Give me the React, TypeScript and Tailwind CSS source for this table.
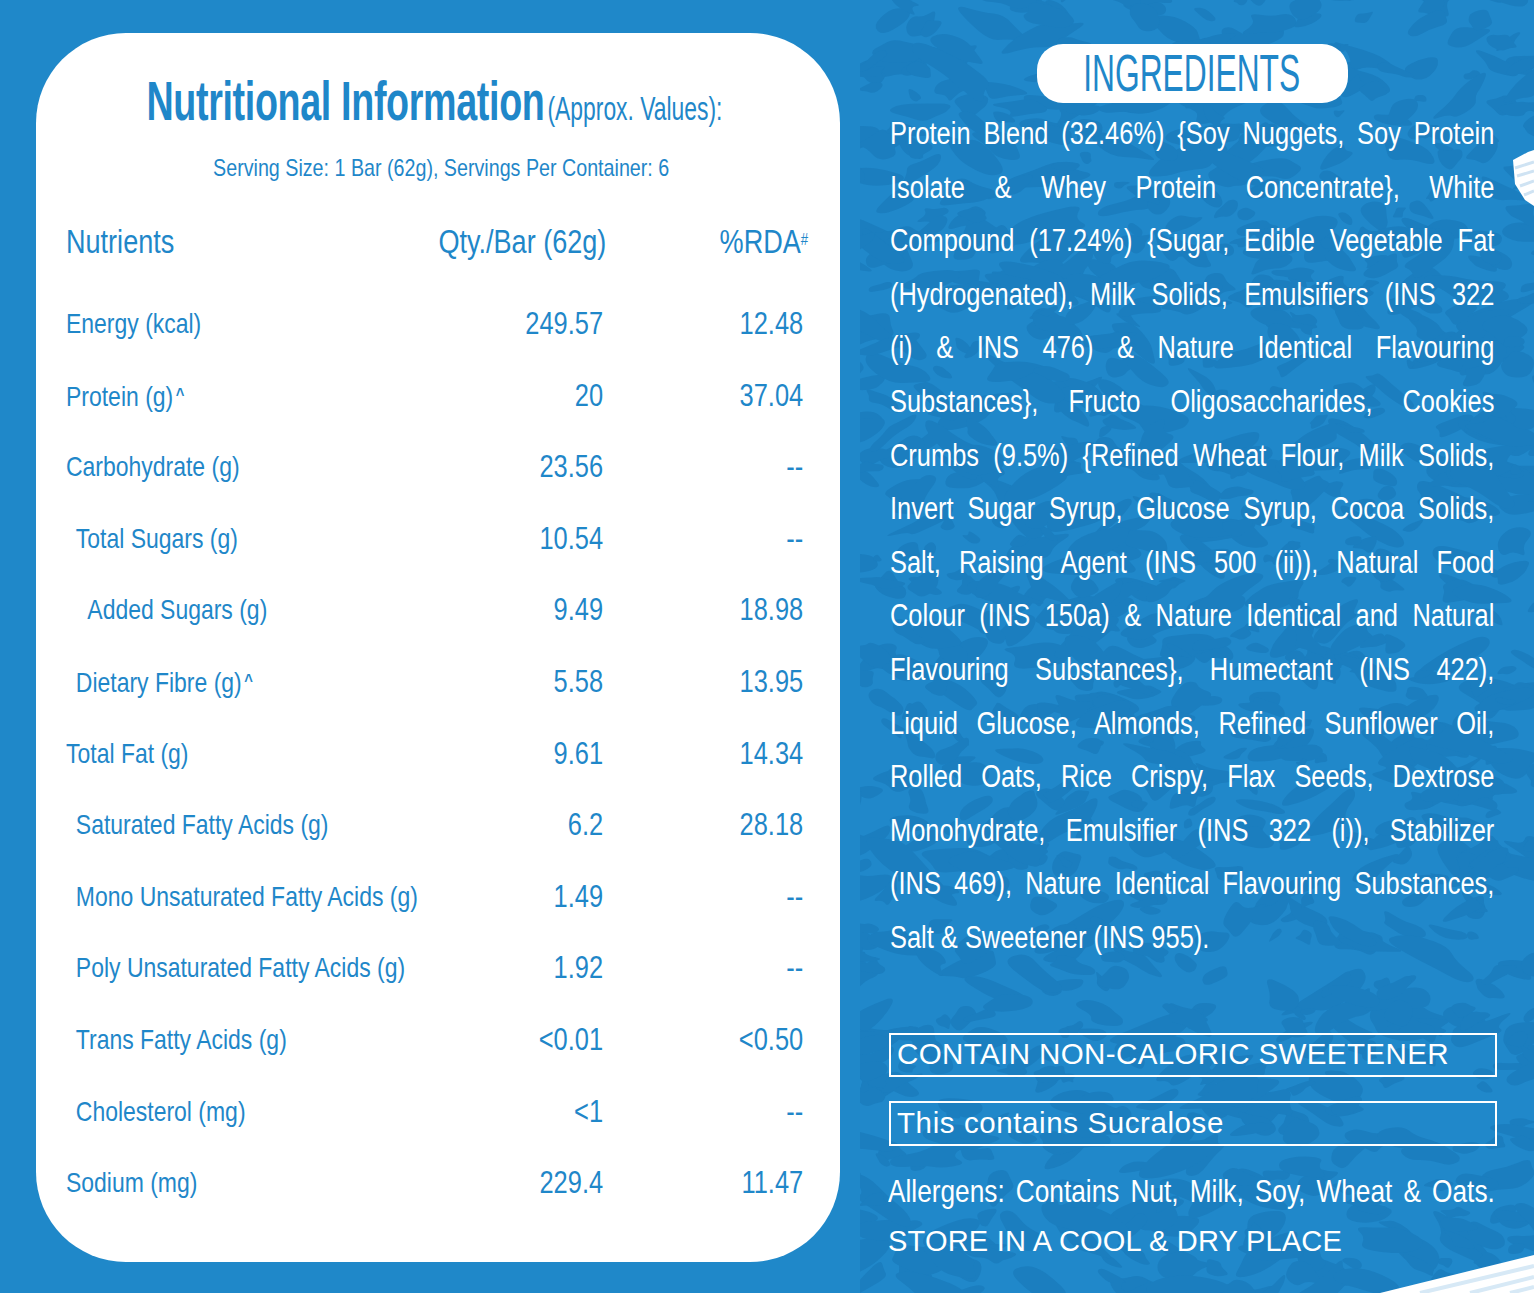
import React from 'react'

// Nutrition panel on the left, ingredients on the textured right.
// The label face is a condensed sans; we get it by squeezing Liberation Sans
// horizontally (x0.82 ~ Arial Narrow), so widths inside the squeezed blocks are
// written in pre-scale pixels (visual / 0.82).
const rows: [string, string, string, number, boolean][] = [
  ['Energy (kcal)', '249.57', '12.48', 0, false],
  ['Protein (g)', '20', '37.04', 0, true],
  ['Carbohydrate (g)', '23.56', '--', 0, false],
  ['Total Sugars (g)', '10.54', '--', 1, false],
  ['Added Sugars (g)', '9.49', '18.98', 2, false],
  ['Dietary Fibre (g)', '5.58', '13.95', 1, true],
  ['Total Fat (g)', '9.61', '14.34', 0, false],
  ['Saturated Fatty Acids (g)', '6.2', '28.18', 1, false],
  ['Mono Unsaturated Fatty Acids (g)', '1.49', '--', 1, false],
  ['Poly Unsaturated Fatty Acids (g)', '1.92', '--', 1, false],
  ['Trans Fatty Acids (g)', '<0.01', '<0.50', 1, false],
  ['Cholesterol (mg)', '<1', '--', 1, false],
  ['Sodium (mg)', '229.4', '11.47', 0, false],
]

const ingredientLines = [
  'Protein Blend (32.46%) {Soy Nuggets, Soy Protein',
  'Isolate & Whey Protein Concentrate}, White',
  'Compound (17.24%) {Sugar, Edible Vegetable Fat',
  '(Hydrogenated), Milk Solids, Emulsifiers (INS 322',
  '(i) & INS 476) & Nature Identical Flavouring',
  'Substances}, Fructo Oligosaccharides, Cookies',
  'Crumbs (9.5%) {Refined Wheat Flour, Milk Solids,',
  'Invert Sugar Syrup, Glucose Syrup, Cocoa Solids,',
  'Salt, Raising Agent (INS 500 (ii)), Natural Food',
  'Colour (INS 150a) & Nature Identical and Natural',
  'Flavouring Substances}, Humectant (INS 422),',
  'Liquid Glucose, Almonds, Refined Sunflower Oil,',
  'Rolled Oats, Rice Crispy, Flax Seeds, Dextrose',
  'Monohydrate, Emulsifier (INS 322 (i)), Stabilizer',
  '(INS 469), Nature Identical Flavouring Substances,',
  'Salt & Sweetener (INS 955).',
]

const indents = ['pl-0', 'pl-[12px]', 'pl-[26px]']

function seeded(seed: number) {
  let s = seed
  return () => {
    s = (s * 16807) % 2147483647
    return (s - 1) / 2147483646
  }
}

// Camo-like blobs for the wrapper texture.
function makeBlobs() {
  const r = seeded(23)
  const out: string[] = []
  for (let i = 0; i < 1100; i++) {
    const cx = r() * 714 - 20
    const cy = r() * 1333 - 20
    const rad = 5 + r() * 12
    const sx = 1.2 + r() * 2.2
    const rot = (r() - 0.5) * 1.4
    const n = 7 + Math.floor(r() * 3)
    const pts: [number, number][] = []
    for (let k = 0; k < n; k++) {
      const a = (k / n) * Math.PI * 2
      const rr = rad * (0.35 + r() * 0.9)
      const x = Math.cos(a) * rr * sx
      const y = Math.sin(a) * rr
      pts.push([cx + x * Math.cos(rot) - y * Math.sin(rot), cy + x * Math.sin(rot) + y * Math.cos(rot)])
    }
    const mid = (p: [number, number], q: [number, number]) => [(p[0] + q[0]) / 2, (p[1] + q[1]) / 2]
    const m0 = mid(pts[n - 1], pts[0])
    let d = `M${m0[0].toFixed(1)} ${m0[1].toFixed(1)}`
    for (let k = 0; k < n; k++) {
      const m = mid(pts[k], pts[(k + 1) % n])
      d += ` Q${pts[k][0].toFixed(1)} ${pts[k][1].toFixed(1)} ${m[0].toFixed(1)} ${m[1].toFixed(1)}`
    }
    out.push(d + 'Z')
  }
  return out
}

const blobs = makeBlobs()

export default function App() {
  return (
    <div className="flex h-[1293px] w-[1534px] overflow-hidden bg-[#1f88c9]">
      {/* Nutrition card */}
      <section className="w-[860px] shrink-0 pb-[31px] pl-[36px] pr-[20px] pt-[33px]">
        <div className="rounded-[90px] bg-white pb-[43px] pl-[30px] pr-[37px] pt-[45px] font-['Liberation_Sans',sans-serif] text-[#1f87c9]">
          <div className="w-[899px] origin-left scale-x-[0.82]">
            <div className="flex h-[60px] items-center justify-center">
              <span className="inline-block scale-x-[0.82] whitespace-nowrap leading-[60px]">
                <span className="text-[56px] font-bold tracking-[-0.5px]">Nutritional Information</span>{' '}
                <span className="text-[34px]">(Approx. Values):</span>
              </span>
            </div>
            <div className="mt-[15px] h-[30px] pl-[16px] text-center text-[24px] leading-[30px]">
              Serving Size: 1 Bar (62g), Servings Per Container: 6
            </div>
            <div className="mt-[34px] grid h-[50px] grid-cols-[1fr_260px_244px] items-center text-[33px] leading-[50px]">
              <span>Nutrients</span>
              <span className="-mr-[4px] whitespace-nowrap text-right">Qty./Bar (62g)</span>
              <span className="-mr-[6px] text-right">
                %RDA<sup className="text-[16px]">#</sup>
              </span>
            </div>
            <div className="mt-[21px]">
              {rows.map(([name, qty, rda, indent, caret]) => (
                <div key={name} className="grid h-[71.6px] grid-cols-[1fr_183px_244px] items-center leading-[71.6px]">
                  <span className={`${indents[indent]} whitespace-nowrap text-[28px]`}>
                    {name}
                    {caret && <span className="ml-[3px] align-[5px] text-[18px] font-bold">^</span>}
                  </span>
                  <span className="text-right text-[31px]">{qty}</span>
                  <span className="text-right text-[31px]">{rda}</span>
                </div>
              ))}
            </div>
          </div>
        </div>
      </section>

      {/* Ingredients */}
      <section className="relative w-[674px] min-w-0 shrink-0 bg-[#2088ca] pl-[30px] pr-[40px] pt-[44px]">
        <svg className="absolute inset-0 h-full w-full" viewBox="0 0 674 1293" preserveAspectRatio="none">
          {blobs.map((d, i) => (
            <path key={i} d={d} fill="#1b7ebf" />
          ))}
          <path d="M653 160 L668 152 L674 150 L674 206 L665 200 L655 184 Z" fill="#ffffff" />
          <path d="M655 168 L674 162 M657 176 L674 171 M660 186 L674 181 M664 195 L674 191" stroke="#cfe3f3" strokeWidth="3" />
          <path d="M520 1293 L674 1255 L674 1293 Z" fill="#ffffff" />
          <path d="M560 1293 L674 1266 M610 1293 L674 1277 M650 1293 L674 1287" stroke="#d7e9f6" strokeWidth="4" />
        </svg>

        <div className="relative text-white">
          <div className="flex justify-center">
            <div className="flex h-[59px] w-[311px] items-center justify-center rounded-[26px] bg-white">
              <span className="inline-block scale-x-[0.61] font-['Liberation_Sans',sans-serif] text-[52px] leading-[59px] text-[#1f87c9]">
                INGREDIENTS
              </span>
            </div>
          </div>

          <div className="mt-[4px] w-[737px] origin-left scale-x-[0.82] font-['Liberation_Sans',sans-serif] text-[31px]">
            {ingredientLines.map((line, i) => (
              <div
                key={i}
                className={`h-[53.6px] whitespace-nowrap leading-[53.6px] ${
                  i < ingredientLines.length - 1 ? 'text-justify [text-align-last:justify]' : ''
                }`}
              >
                {line}
              </div>
            ))}
          </div>

          <div className="-ml-[1px] -mr-[3px] mt-[68px] flex h-[44px] items-center border-2 border-white pl-[6px] font-['Liberation_Sans',sans-serif] text-[29.5px] tracking-[0.4px]">
            CONTAIN NON-CALORIC SWEETENER
          </div>
          <div className="-ml-[1px] -mr-[3px] mt-[24px] flex h-[45px] items-center border-2 border-white pl-[6px] font-['Liberation_Sans',sans-serif] text-[29.5px] tracking-[0.6px]">
            This contains Sucralose
          </div>
          <div className="-ml-[2px] mt-[20px] h-[50px] w-[740px] origin-left scale-x-[0.82] whitespace-nowrap font-['Liberation_Sans',sans-serif] text-[32px] leading-[50px] [text-align-last:justify]">
            Allergens: Contains Nut, Milk, Soy, Wheat &amp; Oats.
          </div>
          <div className="-ml-[2px] h-[50px] font-['Liberation_Sans',sans-serif] text-[29px] leading-[50px] tracking-[0.2px]">
            STORE IN A COOL &amp; DRY PLACE
          </div>
        </div>
      </section>
    </div>
  )
}
